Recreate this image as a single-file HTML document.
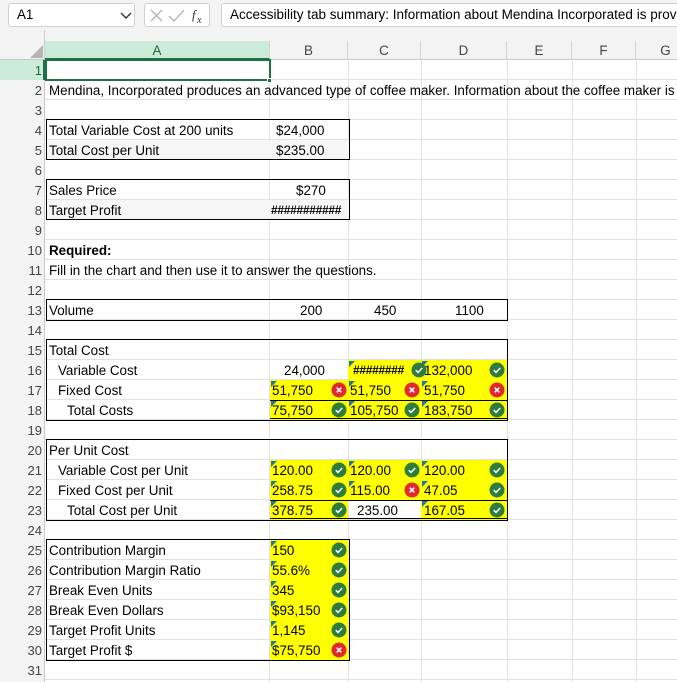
<!DOCTYPE html>
<html><head><meta charset="utf-8"><style>
*{margin:0;padding:0;box-sizing:border-box}
body{width:677px;height:682px;overflow:hidden;background:#fff;font-family:"Liberation Sans",sans-serif;font-size:13.4px;color:#000;position:relative}
.a{position:absolute}
.t{position:absolute;height:20px;line-height:21px;white-space:nowrap;overflow:visible}
.rh{position:absolute;left:0;width:42px;text-align:right;height:20px;line-height:21px;color:#444;font-size:13px}
.ch{position:absolute;top:41px;height:19px;line-height:19px;text-align:center;color:#444;border-right:1px solid #d4d4d4}
.y{position:absolute;background:#ffff00;height:20px}
.ic{position:absolute;width:16px;height:16px}
.tri{position:absolute;width:0;height:0;border-top:6px solid #1f78a8;border-right:6px solid transparent}
.bx{position:absolute;border:1px solid #000}
.hl{position:absolute;height:1px;background:#000}
.h{font-size:12px;font-weight:bold;letter-spacing:-0.3px}
</style></head><body>
<div class="a" style="left:0;top:0;width:677px;height:41px;background:#f3f3f3"></div>
<div class="a" style="left:8px;top:3px;width:127px;height:24px;border:1px solid #d0d0d0;border-radius:3px;background:#fff;padding-left:8px;line-height:22px">A1</div>
<svg class="a" style="left:120px;top:10px" width="12" height="10"><path d="M1 3 L6 8 L11 3" stroke="#333" stroke-width="1.4" fill="none"/></svg>
<div class="a" style="left:144px;top:3px;width:66px;height:24px;border:1px solid #d0d0d0;border-radius:3px;background:#fff"></div>
<svg class="a" style="left:149px;top:7px" width="58" height="18"><path d="M2 3 L13 14 M13 3 L2 14" stroke="#b0b0b0" stroke-width="1.3"/><path d="M20 9 L25 14 L35 3" stroke="#b0b0b0" stroke-width="1.3" fill="none"/><text x="43" y="12" font-family="Liberation Serif" font-style="italic" font-size="13" fill="#333">f</text><text x="48" y="16" font-family="Liberation Serif" font-style="italic" font-size="10" fill="#333">x</text></svg>
<div class="a" style="left:221px;top:3px;width:470px;height:24px;border:1px solid #d0d0d0;border-radius:3px;background:#fff;padding-left:8px;line-height:22px;white-space:nowrap;overflow:hidden;font-size:13.5px">Accessibility tab summary: Information about Mendina Incorporated is provided</div>
<div class="a" style="left:0;top:41px;width:677px;height:19px;background:#f3f3f3;border-bottom:1px solid #c8c8c8"></div>
<div class="a" style="left:0;top:60px;width:45px;height:622px;background:#f3f3f3;border-right:1px solid #c8c8c8"></div>
<div class="a" style="left:44px;top:30px;width:1px;height:30px;background:#c8c8c8"></div>
<svg class="a" style="left:30px;top:45px" width="13" height="13"><path d="M13 0 L13 13 L0 13Z" fill="#b4b4b4"/></svg>
<div class="ch" style="left:45px;width:225px;background:#cdebd9;color:#1e6b3c;border-bottom:2px solid #1e7145;height:19px">A</div>
<div class="ch" style="left:270px;width:78px">B</div>
<div class="ch" style="left:348px;width:73px">C</div>
<div class="ch" style="left:421px;width:86px">D</div>
<div class="ch" style="left:507px;width:65px">E</div>
<div class="ch" style="left:572px;width:64px">F</div>
<div class="ch" style="left:636px;width:60px">G</div>
<div class="a" style="left:0;top:60px;width:45px;height:20px;background:#cdebd9;border-right:2px solid #1e7145"></div>
<div class="a" style="left:45px;top:60px;width:632px;height:622px;background-image:linear-gradient(#e1e1e1 1px,transparent 1px);background-size:100% 20px;background-position:0 19px"></div>
<div class="a" style="left:269px;top:60px;width:1px;height:622px;background:#e1e1e1"></div>
<div class="a" style="left:348px;top:60px;width:1px;height:622px;background:#e1e1e1"></div>
<div class="a" style="left:421px;top:60px;width:1px;height:622px;background:#e1e1e1"></div>
<div class="a" style="left:507px;top:60px;width:1px;height:622px;background:#e1e1e1"></div>
<div class="a" style="left:572px;top:60px;width:1px;height:622px;background:#e1e1e1"></div>
<div class="a" style="left:636px;top:60px;width:1px;height:622px;background:#e1e1e1"></div>
<div class="rh" style="top:60px;color:#1e6b3c">1</div><div class="rh" style="top:80px">2</div><div class="rh" style="top:100px">3</div><div class="rh" style="top:120px">4</div><div class="rh" style="top:140px">5</div><div class="rh" style="top:160px">6</div><div class="rh" style="top:180px">7</div><div class="rh" style="top:200px">8</div><div class="rh" style="top:220px">9</div><div class="rh" style="top:240px">10</div><div class="rh" style="top:260px">11</div><div class="rh" style="top:280px">12</div><div class="rh" style="top:300px">13</div><div class="rh" style="top:320px">14</div><div class="rh" style="top:340px">15</div><div class="rh" style="top:360px">16</div><div class="rh" style="top:380px">17</div><div class="rh" style="top:400px">18</div><div class="rh" style="top:420px">19</div><div class="rh" style="top:440px">20</div><div class="rh" style="top:460px">21</div><div class="rh" style="top:480px">22</div><div class="rh" style="top:500px">23</div><div class="rh" style="top:520px">24</div><div class="rh" style="top:540px">25</div><div class="rh" style="top:560px">26</div><div class="rh" style="top:580px">27</div><div class="rh" style="top:600px">28</div><div class="rh" style="top:620px">29</div><div class="rh" style="top:640px">30</div><div class="rh" style="top:660px">31</div>
<div class="a" style="left:46px;top:140px;width:303px;height:19px;background:#f6f6f6"></div>
<div class="a" style="left:46px;top:200px;width:303px;height:19px;background:#f6f6f6"></div>
<div class="y" style="left:348px;top:360px;width:159px"></div>
<div class="y" style="left:270px;top:380px;width:237px;height:40px"></div>
<div class="y" style="left:270px;top:460px;width:237px;height:40px"></div>
<div class="y" style="left:270px;top:500px;width:78px"></div>
<div class="y" style="left:421px;top:500px;width:86px"></div>
<div class="y" style="left:270px;top:540px;width:78px;height:120px"></div>
<div class="bx" style="left:46px;top:119px;width:304px;height:41px"></div>
<div class="bx" style="left:46px;top:179px;width:304px;height:41px"></div>
<div class="bx" style="left:46px;top:299px;width:462px;height:22px"></div>
<div class="bx" style="left:46px;top:339px;width:462px;height:82px"></div>
<div class="hl" style="left:270px;top:400px;width:238px"></div>
<div class="hl" style="left:270px;top:418px;width:238px"></div>
<div class="bx" style="left:46px;top:439px;width:462px;height:82px"></div>
<div class="hl" style="left:270px;top:500px;width:238px"></div>
<div class="hl" style="left:270px;top:518px;width:238px"></div>
<div class="bx" style="left:46px;top:539px;width:304px;height:122px"></div>
<div class="a" style="left:45px;top:59px;width:226px;height:22px;border:2px solid #1e7145"></div>
<div class="a" style="left:267px;top:78px;width:5px;height:5px;background:#1e7145;border:1px solid #fff"></div>
<div class="t" style="left:49px;top:80px">Mendina, Incorporated produces an advanced type of coffee maker. Information about the coffee maker is</div>
<div class="t" style="left:49px;top:120px">Total Variable Cost at 200 units</div>
<div class="t" style="left:49px;top:140px">Total Cost per Unit</div>
<div class="t" style="left:49px;top:180px">Sales Price</div>
<div class="t" style="left:49px;top:200px">Target Profit</div>
<div class="t" style="left:49px;top:240px;font-weight:bold">Required:</div>
<div class="t" style="left:49px;top:260px">Fill in the chart and then use it to answer the questions.</div>
<div class="t" style="left:49px;top:300px">Volume</div>
<div class="t" style="left:49px;top:340px">Total Cost</div>
<div class="t" style="left:58px;top:360px">Variable Cost</div>
<div class="t" style="left:58px;top:380px">Fixed Cost</div>
<div class="t" style="left:67px;top:400px">Total Costs</div>
<div class="t" style="left:49px;top:440px">Per Unit Cost</div>
<div class="t" style="left:58px;top:460px">Variable Cost per Unit</div>
<div class="t" style="left:58px;top:480px">Fixed Cost per Unit</div>
<div class="t" style="left:67px;top:500px">Total Cost per Unit</div>
<div class="t" style="left:49px;top:540px">Contribution Margin</div>
<div class="t" style="left:49px;top:560px">Contribution Margin Ratio</div>
<div class="t" style="left:49px;top:580px">Break Even Units</div>
<div class="t" style="left:49px;top:600px">Break Even Dollars</div>
<div class="t" style="left:49px;top:620px">Target Profit Units</div>
<div class="t" style="left:49px;top:640px">Target Profit $</div>
<div class="t" style="left:276px;top:120px">$24,000</div>
<div class="t" style="left:276px;top:140px">$235.00</div>
<div class="t" style="left:296px;top:180px">$270</div>
<div class="t h" style="left:271px;top:200px">###########</div>
<div class="t" style="left:300px;top:300px">200</div>
<div class="t" style="left:374px;top:300px">450</div>
<div class="t" style="left:455px;top:300px">1100</div>
<div class="t" style="left:284px;top:360px">24,000</div>
<div class="t h" style="left:353px;top:360px">########</div>
<div class="t" style="left:424px;top:360px">132,000</div>
<div class="t" style="left:272px;top:380px">51,750</div>
<div class="t" style="left:350px;top:380px">51,750</div>
<div class="t" style="left:424px;top:380px">51,750</div>
<div class="t" style="left:272px;top:400px">75,750</div>
<div class="t" style="left:350px;top:400px">105,750</div>
<div class="t" style="left:424px;top:400px">183,750</div>
<div class="t" style="left:272px;top:460px">120.00</div>
<div class="t" style="left:350px;top:460px">120.00</div>
<div class="t" style="left:424px;top:460px">120.00</div>
<div class="t" style="left:272px;top:480px">258.75</div>
<div class="t" style="left:350px;top:480px">115.00</div>
<div class="t" style="left:424px;top:480px">47.05</div>
<div class="t" style="left:272px;top:500px">378.75</div>
<div class="t" style="left:357px;top:500px">235.00</div>
<div class="t" style="left:424px;top:500px">167.05</div>
<div class="t" style="left:272px;top:540px">150</div>
<div class="t" style="left:272px;top:560px">55.6%</div>
<div class="t" style="left:272px;top:580px">345</div>
<div class="t" style="left:272px;top:600px">$93,150</div>
<div class="t" style="left:272px;top:620px">1,145</div>
<div class="t" style="left:272px;top:640px">$75,750</div>
<div class="tri" style="left:349px;top:361px"></div><div class="tri" style="left:422px;top:361px"></div>
<div class="tri" style="left:271px;top:381px"></div><div class="tri" style="left:349px;top:381px"></div><div class="tri" style="left:422px;top:381px"></div>
<div class="tri" style="left:271px;top:401px"></div><div class="tri" style="left:349px;top:401px"></div><div class="tri" style="left:422px;top:401px"></div>
<div class="tri" style="left:271px;top:461px"></div><div class="tri" style="left:349px;top:461px"></div><div class="tri" style="left:422px;top:461px"></div>
<div class="tri" style="left:271px;top:481px"></div><div class="tri" style="left:349px;top:481px"></div><div class="tri" style="left:422px;top:481px"></div>
<div class="tri" style="left:271px;top:501px"></div><div class="tri" style="left:422px;top:501px"></div>
<div class="tri" style="left:271px;top:541px"></div><div class="tri" style="left:271px;top:561px"></div><div class="tri" style="left:271px;top:581px"></div><div class="tri" style="left:271px;top:601px"></div><div class="tri" style="left:271px;top:621px"></div><div class="tri" style="left:271px;top:641px"></div>
<svg width="0" height="0" style="position:absolute"><defs>
<symbol id="ok" viewBox="0 0 16 16"><circle cx="8" cy="8" r="7.5" fill="#2e7d3c"/><path d="M4.8 8.2 L7 10.4 L11.2 6" stroke="#fff" stroke-width="1.5" fill="none"/></symbol>
<symbol id="no" viewBox="0 0 16 16"><circle cx="8" cy="8" r="7.5" fill="#e0282e"/><path d="M5.7 5.7 L10.3 10.3 M10.3 5.7 L5.7 10.3" stroke="#fff" stroke-width="1.5"/></symbol>
</defs></svg>
<svg class="ic" style="left:411px;top:362px"><use href="#ok"/></svg>
<svg class="ic" style="left:489px;top:362px"><use href="#ok"/></svg>
<svg class="ic" style="left:331px;top:382px"><use href="#no"/></svg>
<svg class="ic" style="left:404px;top:382px"><use href="#no"/></svg>
<svg class="ic" style="left:489px;top:382px"><use href="#no"/></svg>
<svg class="ic" style="left:331px;top:402px"><use href="#ok"/></svg>
<svg class="ic" style="left:404px;top:402px"><use href="#ok"/></svg>
<svg class="ic" style="left:489px;top:402px"><use href="#ok"/></svg>
<svg class="ic" style="left:331px;top:462px"><use href="#ok"/></svg>
<svg class="ic" style="left:404px;top:462px"><use href="#ok"/></svg>
<svg class="ic" style="left:489px;top:462px"><use href="#ok"/></svg>
<svg class="ic" style="left:331px;top:482px"><use href="#ok"/></svg>
<svg class="ic" style="left:404px;top:482px"><use href="#no"/></svg>
<svg class="ic" style="left:489px;top:482px"><use href="#ok"/></svg>
<svg class="ic" style="left:331px;top:502px"><use href="#ok"/></svg>
<svg class="ic" style="left:489px;top:502px"><use href="#ok"/></svg>
<svg class="ic" style="left:331px;top:542px"><use href="#ok"/></svg>
<svg class="ic" style="left:331px;top:562px"><use href="#ok"/></svg>
<svg class="ic" style="left:331px;top:582px"><use href="#ok"/></svg>
<svg class="ic" style="left:331px;top:602px"><use href="#ok"/></svg>
<svg class="ic" style="left:331px;top:622px"><use href="#ok"/></svg>
<svg class="ic" style="left:331px;top:642px"><use href="#no"/></svg>
</body></html>
